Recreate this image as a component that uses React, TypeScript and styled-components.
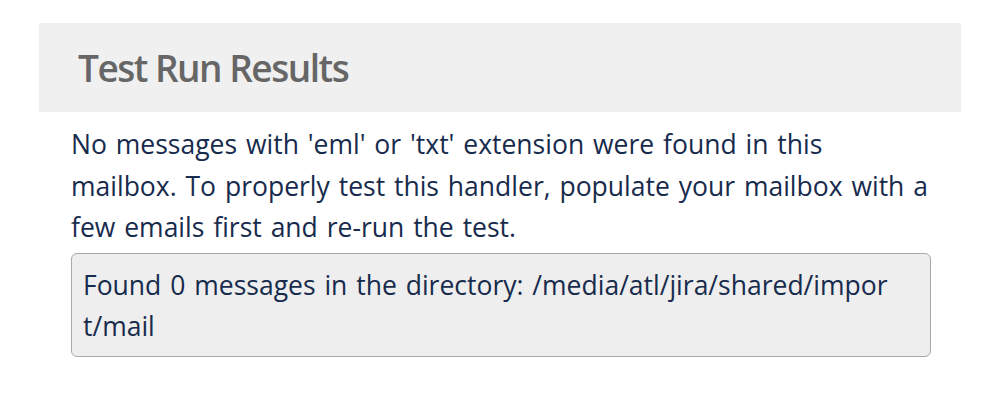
import styled, { createGlobalStyle } from 'styled-components';

const GlobalStyle = createGlobalStyle`
  html, body {
    margin: 0;
    padding: 0;
    background: #fff;
  }
  body {
    font-family: 'Segoe UI', 'Open Sans', 'Noto Sans', sans-serif;
  }
`;

const Page = styled.div`
  width: 998px;
  height: 416px;
  padding: 23px 37px 0 39px;
  box-sizing: border-box;
`;

const Header = styled.div`
  height: 89px;
  background: #f0f0f0;
  display: flex;
  align-items: center;
  padding-left: 39px;
`;

const Title = styled.h2`
  margin: 0;
  font-size: 37px;
  font-weight: 600;
  color: #666666;
  letter-spacing: -1.5px;
`;

const Body = styled.div`
  width: 860px;
  margin: 12px 0 0 32px;
  color: #172b4d;
  font-size: 26.5px;
  line-height: 41.5px;
  word-spacing: 2px;
`;

const Message = styled.p`
  margin: 0;
`;

const Output = styled.div`
  margin-top: 4px;
  padding: 11px 36px 9px 11px;
  background: #eeeeee;
  border: 1px solid #a8a8a8;
  border-radius: 6px;
  line-height: 41px;
  word-break: break-all;
`;

export default function App() {
  return (
    <>
      <GlobalStyle />
      <Page>
        <Header>
          <Title>Test Run Results</Title>
        </Header>
        <Body>
          <Message>
            No messages with 'eml' or 'txt' extension were found in this mailbox. To properly test
            this handler, populate your mailbox with a few emails first and re-run the test.
          </Message>
          <Output>Found 0 messages in the directory: /media/atl/jira/shared/import/mail</Output>
        </Body>
      </Page>
    </>
  );
}
